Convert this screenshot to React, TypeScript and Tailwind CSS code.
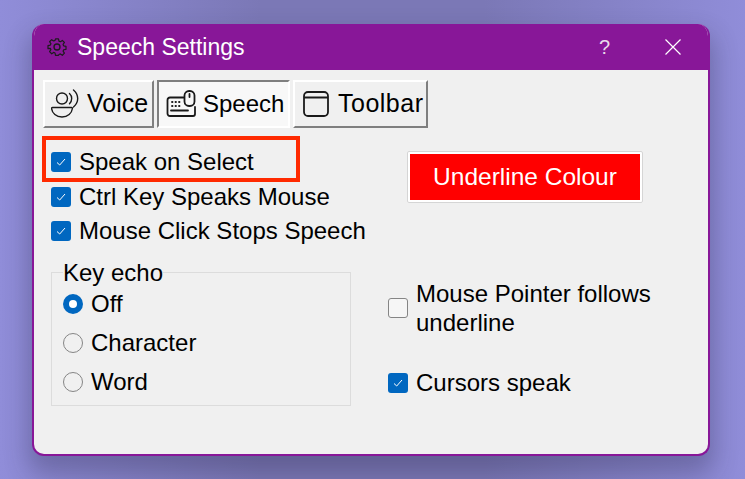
import type { ReactNode } from 'react';

function GearIcon() {
  return (
    <svg width="20" height="20" viewBox="0 0 24 24" fill="none" stroke="#1c1c1c" strokeWidth="1.6" strokeLinejoin="round">
      <path d="M10 2h4l.6 3.100 1.900.8 2.600-1.800 2.800 2.800-1.800 2.600.8 1.900 3.100.6v4l-3.100.6-.8 1.900 1.800 2.600-2.800 2.800-2.600-1.800-1.900.8L14 24h-4l-.6-3.100-1.900-.8-2.600 1.800-2.800-2.800 1.800-2.600-.8-1.900L0 15v-4l3.100-.6.8-1.900-1.800-2.600 2.800-2.800 2.600 1.800 1.900-.8z" transform="translate(1.200 .4) scale(.9)" />
      <circle cx="12" cy="12" r="3.600" />
    </svg>
  );
}

function VoiceIcon() {
  return (
    <svg width="28" height="30" viewBox="0 0 28 30" fill="none" stroke="#1a1a1a" strokeWidth="1.4" strokeLinecap="round">
      <circle cx="11" cy="9.500" r="5.500" />
      <path d="M1.500 18.500h19c.6 0 1 .4.900 1-.6 4.800-4.600 8.500-10.400 8.500S1.200 24.300.600 19.500c-.1-.6.300-1 .9-1z" />
      <path d="M18.500 4.500c1.500 1.400 2.200 3 2.200 5s-.7 3.700-2.200 5.200" />
      <path d="M22.500 1c2.500 2.300 4.200 5.200 4.200 8.500s-1.700 6.300-4.200 8.500" />
    </svg>
  );
}

function SpeechIcon() {
  return (
    <svg width="30" height="28" viewBox="0 0 30 28" fill="none" stroke="#1a1a1a" strokeWidth="1.8" strokeLinecap="round">
      <path d="M17.500 7.500H4a2.500 2.500 0 0 0-2.500 2.500v13.500A2.500 2.500 0 0 0 4 26h23a2 2 0 0 0 2-2v-7" />
      <rect x="18.500" y="1" width="10" height="15" rx="4.500" />
      <path d="M23.500 4v3" />
      <path d="M6 12h.5M9.500 12h.5M13 12h.5M6 16h.5M9.500 16h.5M13 16h.5M5 20.500h17" />
    </svg>
  );
}

function ToolbarIcon() {
  return (
    <svg width="26" height="26" viewBox="0 0 26 26" fill="none" stroke="#1a1a1a" strokeWidth="1.800">
      <rect x="1" y="1" width="24" height="24" rx="4" />
      <path d="M1 6.500h24" />
    </svg>
  );
}

function TabButton({ active, width, spacing, textStyle, children, label }: { active?: boolean; width: string; spacing: string; textStyle: string; children: ReactNode; label: string }) {
  return (
    <button
      className={`flex h-12 items-center border-2 ${width} ${spacing} ${
        active ? 'border-t-[#7f7f7f] border-l-[#7f7f7f] border-b-white border-r-white bg-[#f8f8f8]' : 'border-t-white border-l-white border-b-[#7f7f7f] border-r-[#7f7f7f] bg-[#f0f0f0]'
      }`}
    >
      {children}
      <span className={`text-black ${textStyle}`}>{label}</span>
    </button>
  );
}

function Check({ checked }: { checked?: boolean }) {
  return checked ? (
    <span className="flex size-5 shrink-0 items-center justify-center rounded-[3px] bg-[#0067c0]">
      <svg width="10" height="8" viewBox="0 0 10 8" fill="none" stroke="white" strokeWidth="1">
        <path d="M1 4.500l2.700 2.500L9 1" />
      </svg>
    </span>
  ) : (
    <span className="size-5 shrink-0 rounded-[3px] border border-[#858585] bg-[#f6f6f6]" />
  );
}

function Radio({ checked, label }: { checked?: boolean; label: string }) {
  return (
    <div className="flex h-[39px] items-center gap-2">
      {checked ? (
        <span className="flex size-5 items-center justify-center rounded-full bg-[#0067c0]">
          <span className="size-2 rounded-full bg-white" />
        </span>
      ) : (
        <span className="size-5 rounded-full border border-[#858585]" />
      )}
      <span>{label}</span>
    </div>
  );
}

function CheckRow({ checked, label }: { checked?: boolean; label: string }) {
  return (
    <div className="flex h-[34.5px] items-center gap-2">
      <Check checked={checked} />
      <span>{label}</span>
    </div>
  );
}

export default function App() {
  return (
    <div className="flex h-[479px] w-[745px] overflow-hidden bg-[linear-gradient(to_right,#908dd9_0%,#7b78b6_35%,#7b78b6_65%,#908dd9_100%)] pt-6 pl-8 font-['Liberation_Sans',sans-serif] text-[24px] text-black">
      <div className="flex h-[432px] w-[678px] flex-col overflow-hidden rounded-xl border-2 border-t-0 border-[#881798] bg-[#f0f0f0] shadow-[0_14px_24px_4px_rgba(40,35,70,0.3)]">
        <div className="-mx-0.5 flex h-[46px] shrink-0 items-center bg-[#881798] pr-[29px] pl-[15px] text-white">
          <GearIcon />
          <span className="mt-px ml-[10px] text-[23px]">Speech Settings</span>
          <span className="ml-auto text-[20px] font-light text-[#e8dcea]">?</span>
          <svg className="ml-[55px]" width="16" height="16" viewBox="0 0 16 16" stroke="white" strokeWidth="1.2">
            <path d="M.5.500l15 15M15.500.500l-15 15" />
          </svg>
        </div>

        <div className="relative flex-1 pt-2.5 pl-[9px]">
          <div className="flex gap-[3px]">
            <TabButton width="w-[111px]" spacing="gap-2 pl-1.5" textStyle="text-[25px]" label="Voice">
              <VoiceIcon />
            </TabButton>
            <TabButton active width="w-[133px]" spacing="gap-[7px] pl-[7px]" textStyle="text-[24px]" label="Speech">
              <SpeechIcon />
            </TabButton>
            <TabButton width="w-[135px]" spacing="gap-[9px] pl-2" textStyle="text-[25px] tracking-[0.5px]" label="Toolbar">
              <ToolbarIcon />
            </TabButton>
          </div>

          <div className="mt-[7px] flex">
            <div className="w-[344px] pl-2">
              <div className="pt-[10px]">
                <CheckRow checked label="Speak on Select" />
                <CheckRow checked label="Ctrl Key Speaks Mouse" />
                <CheckRow checked label="Mouse Click Stops Speech" />
              </div>
              <fieldset className="mt-[11px] h-[146px] w-[300px] border border-[#dcdcdc] pl-[11px]">
                <legend className="px-0 leading-[25px]">Key echo</legend>
                <Radio checked label="Off" />
                <Radio label="Character" />
                <Radio label="Word" />
              </fieldset>
            </div>

            <div className="pl-px">
              <div className="mt-4 ml-[19px] h-[52px] w-[236px] rounded-[2px] border border-[#d5d5d5] bg-white p-0.5">
                <div className="flex h-full items-center justify-center bg-[#ff0000] text-[24.5px] text-white">Underline Colour</div>
              </div>
              <div className="mt-[76px] flex items-center gap-2">
                <Check />
                <span className="w-[270px] leading-[29px]">Mouse Pointer follows underline</span>
              </div>
              <div className="mt-7 flex items-center gap-2">
                <Check checked />
                <span>Cursors speak</span>
              </div>
            </div>
          </div>

          <div className="pointer-events-none absolute top-[66px] left-2 h-[46px] w-[258px] border-4 border-[#ff2a00]" />
        </div>
      </div>
    </div>
  );
}
